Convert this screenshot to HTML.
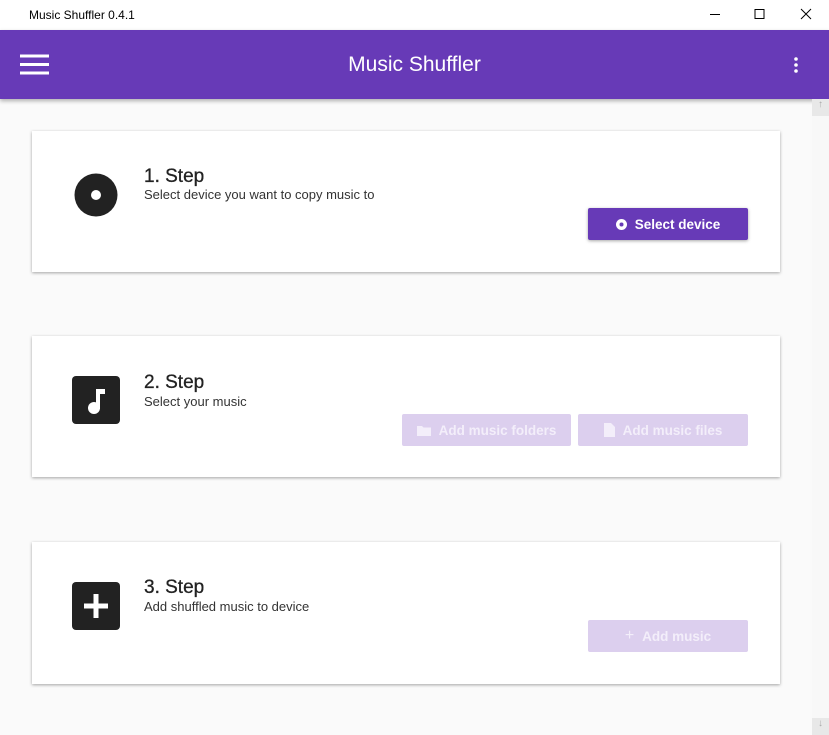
<!DOCTYPE html>
<html><head><style>
body{margin:0;width:829px;height:735px;overflow:hidden;background:#fafafa;font-family:"Liberation Sans",sans-serif;position:relative}
.tb{position:absolute;left:0;top:0;width:829px;height:30px;background:#fff}
.tb .t{position:absolute;left:29px;top:8px;font-size:12px;color:#000}
.bar{position:absolute;left:0;top:30px;width:829px;height:69px;background:#673ab7;box-shadow:0 2px 4px rgba(0,0,0,.3)}
.bar .h{position:absolute;left:0;width:829px;text-align:center;top:23px;color:#fff;font-size:21px}
.card{position:absolute;left:32px;width:748px;background:#fff;box-shadow:0 1px 3px rgba(0,0,0,.35)}
.ti{position:absolute;left:112px;font-size:19px;color:#222;-webkit-text-stroke:0.3px #222}
.su{position:absolute;left:112px;font-size:13px;color:#333}
.btn{position:absolute;height:32px;border-radius:2px;color:#fff;font-weight:bold;font-size:13.5px;display:flex;align-items:center;justify-content:center;gap:8px}
.on{background:#673ab7;box-shadow:0 1px 3px rgba(0,0,0,.35)}
.off{background:#dccfee;color:#f3eefa}
.sq{position:absolute;left:40px;width:48px;height:48px;background:#222;border-radius:4px}
.sb{position:absolute;left:812px;top:99px;width:17px;height:636px;background:#f8f8f8}
</style></head><body>
<div class="tb"><span class="t">Music Shuffler 0.4.1</span>
<svg style="position:absolute;left:700px;top:0" width="129" height="30"><path d="M10 14.5h10M55 9.5h9v9h-9z M101 9l10 10M111 9l-10 10" stroke="#000" fill="none" stroke-width="1"/></svg></div>
<div class="bar">
<svg style="position:absolute;left:20px;top:24px" width="30" height="22"><path d="M0 2h29M0 10.5h29M0 19h29" stroke="#fff" stroke-width="3"/></svg>
<div class="h">Music Shuffler</div>
<svg style="position:absolute;left:792px;top:26px" width="8" height="20"><circle cx="4" cy="3" r="1.8" fill="#fff"/><circle cx="4" cy="9" r="1.8" fill="#fff"/><circle cx="4" cy="15" r="1.8" fill="#fff"/></svg>
</div>
<div class="sb"><div style="position:absolute;top:0;width:17px;height:17px;background:#e8e8e8;color:#aaa;font-size:10px;text-align:center">↑</div><div style="position:absolute;bottom:0;width:17px;height:17px;background:#e8e8e8;color:#aaa;font-size:10px;text-align:center">↓</div></div>

<div class="card" style="top:131px;height:141px">
<svg style="position:absolute;left:42px;top:42px" width="44" height="44"><circle cx="22" cy="22" r="21.5" fill="#222"/><circle cx="22" cy="22" r="5" fill="#fff"/></svg>
<div class="ti" style="top:35px">1. Step</div>
<div class="su" style="top:56px">Select device you want to copy music to</div>
<div class="btn on" style="left:556px;top:77px;width:160px"><svg width="11" height="11"><circle cx="5.5" cy="5.5" r="5.5" fill="#fff"/><circle cx="5.5" cy="5.5" r="2" fill="#673ab7"/></svg>Select device</div>
</div>

<div class="card" style="top:336px;height:141px">
<div class="sq" style="top:40px"><svg width="48" height="48"><rect x="24" y="13" width="4" height="20" fill="#fff"/><rect x="24" y="13" width="9" height="5" fill="#fff"/><circle cx="22" cy="32" r="6" fill="#fff"/></svg></div>
<div class="ti" style="top:36px">2. Step</div>
<div class="su" style="top:58px">Select your music</div>
<div class="btn off" style="left:370px;top:78px;width:169px"><svg width="14" height="11"><path d="M0 1h5l1.5 1.5H14V11H0z" fill="#f3eefa"/></svg>Add music folders</div>
<div class="btn off" style="left:546px;top:78px;width:170px"><svg width="11" height="14"><path d="M0 0h7l4 4v10H0z" fill="#f3eefa"/></svg>Add music files</div>
</div>

<div class="card" style="top:542px;height:142px">
<div class="sq" style="top:40px"><svg width="48" height="48"><path d="M24 12v24M12 24h24" stroke="#fff" stroke-width="5"/></svg></div>
<div class="ti" style="top:35px">3. Step</div>
<div class="su" style="top:57px">Add shuffled music to device</div>
<div class="btn off" style="left:556px;top:78px;width:160px"><span style="font-weight:normal;font-size:16px">+</span>Add music</div>
</div>
</body></html>
